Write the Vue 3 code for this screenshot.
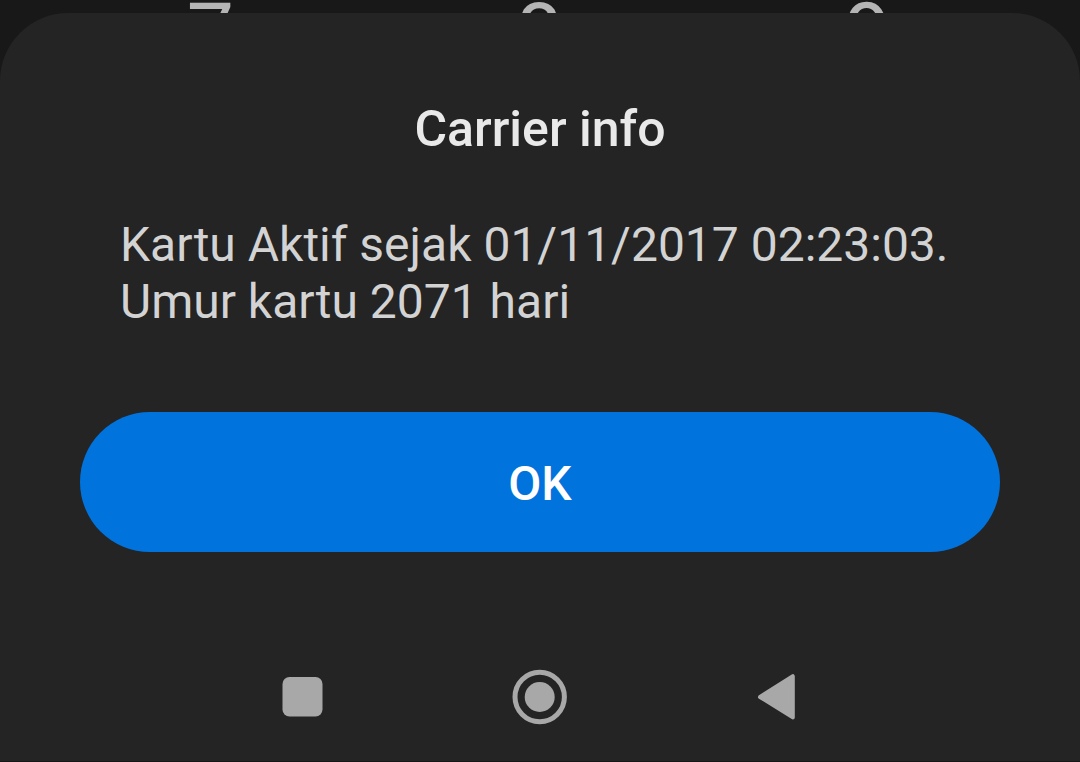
<script setup>
const keys = ['7', '8', '9']
</script>

<template>
  <div class="screen">
    <div class="keypad" aria-hidden="true">
      <span v-for="key in keys" :key="key" class="key">{{ key }}</span>
    </div>
    <section class="sheet" role="dialog" aria-labelledby="title" aria-describedby="message">
      <h1 id="title" class="title">Carrier info</h1>
      <p id="message" class="message">Kartu Aktif sejak 01/11/2017 02:23:03.<br />Umur kartu 2071 hari</p>
      <button type="button" class="confirm">OK</button>
      <nav class="nav" aria-label="System navigation">
        <button type="button" class="nav-button" aria-label="Recent apps">
          <svg class="icon" viewBox="0 0 60 60">
            <rect x="10.5" y="10" width="40" height="39.5" rx="7" />
          </svg>
        </button>
        <button type="button" class="nav-button" aria-label="Home">
          <svg class="icon" viewBox="0 0 60 60">
            <circle cx="29.7" cy="30" r="24.7" fill="none" stroke="#a8a8a8" stroke-width="5" />
            <circle cx="29.7" cy="30" r="15" />
          </svg>
        </button>
        <button type="button" class="nav-button" aria-label="Back">
          <svg class="icon" viewBox="0 0 60 60">
            <path d="M12 30 L44.8 9.2 V50.4 Z" stroke="#a8a8a8" stroke-width="4" stroke-linejoin="round" />
          </svg>
        </button>
      </nav>
    </section>
  </div>
</template>

<style>
body {
  margin: 0;
  background: #181818;
}
</style>

<style scoped>
.screen {
  box-sizing: border-box;
  display: flex;
  flex-direction: column;
  min-height: 100vh;
  padding-bottom: 1px;
  background: #181818;
  font-family: Roboto, "Liberation Sans", sans-serif;
}

.keypad {
  display: grid;
  grid-template-columns: repeat(3, 1fr);
  height: 13px;
  padding: 0 48px 0 46px;
  overflow: hidden;
  color: #b4b4b4;
  font-size: 84px;
  line-height: 68px;
  text-align: center;
}

.sheet {
  flex: 1;
  display: flex;
  flex-direction: column;
  box-sizing: border-box;
  padding: 86px 80px 0;
  border-radius: 68px 68px 0 0;
  background: #242424;
}

.title {
  margin: 0 0 57px;
  color: #e9e9e9;
  font-size: 50px;
  font-weight: 500;
  line-height: 60px;
  text-align: center;
}

.message {
  margin: 0 0 82px;
  padding: 0 40px;
  color: #d3d3d3;
  font-size: 48px;
  line-height: 57px;
}

.confirm {
  height: 140px;
  padding: 2px 0 0;
  border: 0;
  border-radius: 70px;
  background: #0073dd;
  color: #fff;
  font-family: inherit;
  font-size: 48px;
  font-weight: 500;
  cursor: pointer;
}

.nav {
  display: grid;
  grid-template-columns: repeat(3, 22vw);
  justify-content: center;
  margin-top: auto;
}

.nav-button {
  display: flex;
  align-items: center;
  justify-content: center;
  height: 129px;
  padding: 0;
  border: 0;
  background: none;
  cursor: pointer;
}

.icon {
  width: 60px;
  height: 60px;
  fill: #a8a8a8;
}
</style>
